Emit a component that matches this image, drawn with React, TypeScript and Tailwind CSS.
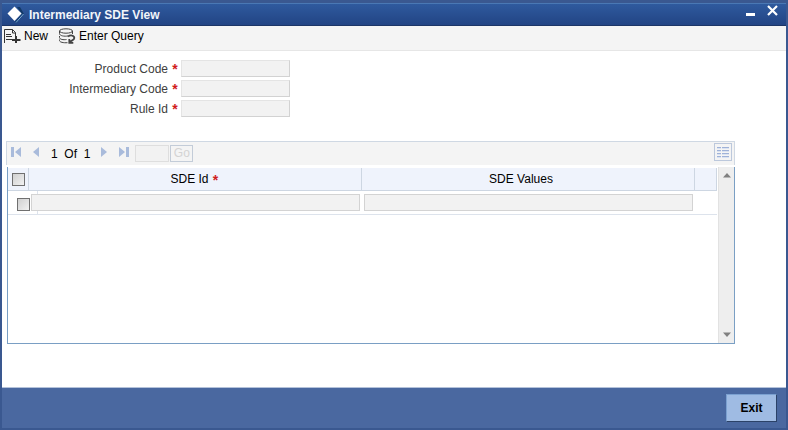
import { useState } from "react";
import type { ReactNode } from "react";

const fields = [
  { id: "productCode", label: "Product Code" },
  { id: "intermediaryCode", label: "Intermediary Code" },
  { id: "ruleId", label: "Rule Id" },
];

function Required() {
  return <span className="w-2 h-4 pt-[2px] text-center text-[14px] leading-[14px] font-bold text-[#d01c1c]">*</span>;
}

function PagerButton({ label, children }: { label: string; children: ReactNode }) {
  return (
    <button type="button" aria-label={label} className="flex items-start w-3 h-[15px] shrink-0">
      <svg width="12" height="12" viewBox="0 0 12 12" fill="#a9bbdb">{children}</svg>
    </button>
  );
}

function TickBox({ label, className }: { label: string; className: string }) {
  return (
    <input
      type="checkbox"
      aria-label={label}
      className={`block appearance-none w-[13px] h-[13px] border border-[#707070] bg-gradient-to-br from-[#d0d0d0] to-[#f2f2f2] checked:bg-[#4a68a0] ${className}`}
    />
  );
}

export default function App() {
  const [values, setValues] = useState<Record<string, string>>({});

  return (
    <div className="min-h-screen flex flex-col bg-white border-2 border-t-[3px] border-[#3a5890] font-['Liberation_Sans',Arial,sans-serif] text-[12px] leading-4 text-black">
      {/* Title bar */}
      <header className="h-[23px] shrink-0 flex items-center pl-[5px] pr-2 border-t border-t-[#4a78b4] border-b border-b-[#1c3566] bg-gradient-to-b from-[#2f5a9e] to-[#224484] text-white">
        <svg width="17" height="18" viewBox="0 0 17 18" className="shrink-0">
          <path d="M10 1h3l4 7-8 9-1-1 7-8z" fill="#123a68" />
          <path d="M9 16.500L16.500 8" stroke="#7fb0d8" strokeWidth="1" />
          <path d="M7.500 0.500L14.500 7.500L7.500 15L0.500 7.500z" fill="#fff" />
        </svg>
        <h1 className="ml-[5px] flex-1 font-bold text-[#f2f5fa]">Intermediary SDE View</h1>
        <button type="button" aria-label="Minimize" className="flex items-start w-[9px] h-[19px]">
          <svg width="9" height="12" viewBox="0 0 9 12"><path d="M0 8h9v3H0z" fill="#fff" /></svg>
        </button>
        <button type="button" aria-label="Close" className="flex items-start ml-3 w-[11px] h-[19px]">
          <svg width="11" height="11" viewBox="0 0 11 11"><path d="M1 1l9 9M10 1l-9 9" stroke="#fff" strokeWidth="2.2" /></svg>
        </button>
      </header>

      {/* Toolbar */}
      <nav className="h-[25px] shrink-0 flex items-start pt-[2px] pl-[2px] bg-[#f4f4f4] border-b border-[#e6e6e6]">
        <button type="button" className="flex">
          <svg width="17" height="16" viewBox="0 0 17 16" fill="none" stroke="#333">
            <path d="M0.500 15V1.500h8l3 3v4" />
            <path d="M8.500 1.500v3.500h3" />
            <path d="M2 6.500h5M2 8.500h6M2 11.500h6" />
            <path d="M12 8v7M8 12h8.500" strokeWidth="2" />
          </svg>
          <span className="ml-[3px]">New</span>
        </button>
        <button type="button" className="ml-[11px] flex">
          <svg width="17" height="16" viewBox="0 0 17 16" fill="none" stroke="#444">
            <ellipse cx="7" cy="3" rx="6.500" ry="2.200" />
            <path d="M0.500 3v2.500M13.500 3v3M0.500 5.500c0 2.500 5 3 8.500 2.500M0.500 8v1.500c0 2 4 2.500 7 2M0.500 11.500v1c0 1.700 4 2.500 8 2.200" />
            <path d="M9 8.500c2.500-1.800 6.300-1.200 6.300 1.500 0 2-2.300 2-4.500 4M10.300 11v3.800h4" strokeWidth="1.800" />
          </svg>
          <span className="ml-[3px]">Enter Query</span>
        </button>
      </nav>

      <main className="flex-1 pt-[9px]">
        <form className="flex flex-col gap-[3px]">
          {fields.map((f) => (
            <div key={f.id} className="flex h-[17px]">
              <label htmlFor={f.id} className="flex w-[177px] justify-end gap-[3px] leading-[18px] text-[#404040]">
                {f.label}
                <Required />
              </label>
              <input
                id={f.id}
                value={values[f.id] ?? ""}
                onChange={(e) => setValues({ ...values, [f.id]: e.target.value })}
                className="ml-[2px] w-[109px] h-[17px] px-1 bg-[#f2f2f2] border border-[#e4e4e4] border-r-[#d2d2d2] border-b-[#d2d2d2]"
              />
            </div>
          ))}
        </form>

        <section className="mt-6 ml-1 mr-[51px]">
          {/* Pager */}
          <div className="h-6 flex items-center pl-1 pr-[2px] bg-[#f4f4f4] border border-b-0 border-[#cfd8e3]">
            <PagerButton label="First page"><path d="M0 1h3v10H0zM10 1v10L4 6z" /></PagerButton>
            <span className="w-[9px]" />
            <PagerButton label="Previous page"><path d="M7 1v10L1 6z" /></PagerButton>
            <span className="ml-[7px] whitespace-pre">1  Of  1</span>
            <span className="w-[10px]" />
            <PagerButton label="Next page"><path d="M1 1v10L7 6z" /></PagerButton>
            <span className="w-[6px]" />
            <PagerButton label="Last page"><path d="M1 1v10L7 6zM8 1h3v10H8z" /></PagerButton>
            <input aria-label="Page number" className="ml-[5px] w-[34px] h-[17px] px-1 bg-[#f2f2f2] border border-[#dedede]" />
            <button type="button" className="ml-[1px] w-[23px] h-[17px] leading-[15px] border border-[#c3ccd8] text-[#d3d3d3]">Go</button>
            <button type="button" aria-label="Single record view" className="ml-auto mb-1 w-[18px] h-[18px] flex items-center justify-center border border-[#bcc8dc]">
              <svg width="12" height="12" viewBox="0 0 12 12">
                <path d="M0 2h4M5 2h7M0 5h4M5 5h7M0 8h4M5 8h7M0 11h4M5 11h7" stroke="#dbe3f2" strokeWidth="2" />
                <path d="M0 1.500h4M5 1.500h7M0 4.500h4M5 4.500h7M0 7.500h4M5 7.500h7M0 10.500h4M5 10.500h7" stroke="#9fb2d8" />
              </svg>
            </button>
          </div>

          {/* Records */}
          <div className="mt-[2px] ml-px h-[177px] flex border border-t-0 border-[#7a9fc4]">
            <div className="flex-1 pt-px">
              <table className="w-full table-fixed border-separate border-spacing-0">
                <thead>
                  <tr className="h-[23px] bg-[#eff3fc]">
                    <th className="w-[21px] p-0 border-r border-b border-[#cdd6e2]">
                      <TickBox label="Select all rows" className="ml-1" />
                    </th>
                    <th className="p-0 font-normal border-r border-b border-[#cdd6e2]">
                      <div className="flex justify-center gap-[3px]">SDE Id <Required /></div>
                    </th>
                    <th className="p-0 pr-[14px] font-normal border-r border-b border-[#cdd6e2]">SDE Values</th>
                    <th className="w-[22px] p-0 border-r border-b border-[#cdd6e2]" />
                  </tr>
                </thead>
                <tbody>
                  <tr className="h-6">
                    <td className="relative p-0 border-b border-[#dde3ec]">
                      <span className="absolute left-0 top-0 w-[30px] h-[23px] border-r border-[#dde3ec]" />
                      <TickBox label="Select row 1" className="relative mt-1 ml-[9px]" />
                    </td>
                    <td className="relative p-0 pl-[2px] pr-[2px] border-b border-[#dde3ec]">
                      <input aria-label="SDE Id" className="block w-full h-[17px] px-1 bg-[#f2f2f2] border border-[#d3d3d3]" />
                    </td>
                    <td className="p-0 pl-[2px] pr-[2px] border-b border-[#dde3ec]">
                      <input aria-label="SDE Values" className="block w-full h-[17px] px-1 bg-[#f2f2f2] border border-[#d3d3d3]" />
                    </td>
                    <td className="p-0 border-b border-[#dde3ec]" />
                  </tr>
                </tbody>
              </table>
            </div>
            {/* Scroll track */}
            <div className="ml-px w-4 flex flex-col justify-between items-center py-[6px] bg-[#eeeeee] border-l border-[#e2e2e2]">
              <svg width="8" height="5" viewBox="0 0 8 5"><path d="M0 4.500L4 0l4 4.500z" fill="#808080" /></svg>
              <svg width="8" height="5" viewBox="0 0 8 5"><path d="M0 0.500L4 5l4-4.500z" fill="#808080" /></svg>
            </div>
          </div>
        </section>
      </main>

      <footer className="h-[41px] shrink-0 flex justify-end pt-[6px] pr-[9px] bg-[#4a68a0] border-t border-[#b4c2da]">
        <button type="button" className="w-[51px] h-7 bg-[#9fbbe3] border border-[#7ba0d0] border-r-[#2b4268] border-b-[#2b4268] font-bold">
          Exit
        </button>
      </footer>
    </div>
  );
}
